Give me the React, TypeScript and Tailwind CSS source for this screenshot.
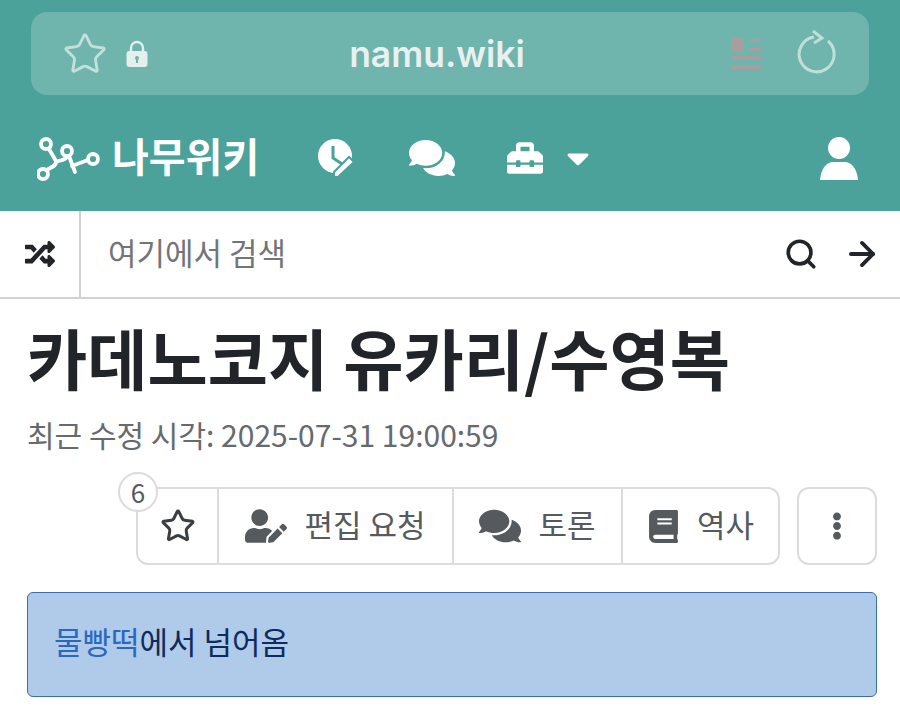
import { ArrowRight, Search, Star } from "lucide-react";
import { FaBook, FaCaretDown, FaComments, FaEllipsisV, FaRandom, FaToolbox, FaUserEdit } from "react-icons/fa";

const kr = "font-['Noto_Sans_CJK_KR','Noto_Sans',sans-serif]";

const TreeMark = () => (
  <svg width="64" height="46" viewBox="0 0 64 46" fill="none" stroke="white" strokeWidth="3.8">
    <path d="M10 35 C14 32 20 31 19 26 L12 14" />
    <path d="M19 27 C24 24 27 27 31 21 M32 21 L38 37 M35 31 L51 25" strokeLinecap="round" />
    <circle cx="6" cy="39" r="5" />
    <circle cx="9" cy="9" r="5" />
    <circle cx="30" cy="16" r="5" />
    <circle cx="56" cy="24" r="5" />
  </svg>
);

const RecentIcon = () => (
  <svg width="38" height="38" viewBox="0 0 38 38">
    <circle cx="17" cy="17" r="17" fill="white" />
    <path d="M15 7 V19 L24 25" fill="none" stroke="#4aa29b" strokeWidth="3" />
    <path d="M20 38 L16 38 L16 33 L31 18 L36 23 Z" fill="white" stroke="#4aa29b" strokeWidth="2" />
  </svg>
);

const ReaderIcon = () => (
  <svg width="30" height="31" viewBox="0 0 30 31" fill="#a89e9e">
    <rect x="0" y="0" width="13" height="14" rx="3" />
    <rect x="18" y="1" width="12" height="3" />
    <rect x="18" y="10" width="12" height="3" />
    <rect x="0" y="18" width="30" height="4" />
    <rect x="0" y="27" width="30" height="4" />
  </svg>
);

const ReloadIcon = () => (
  <svg width="40" height="44" viewBox="0 0 40 44" fill="none" stroke="#bfdfda" strokeWidth="3" className="ml-[36px] -mt-[3px]">
    <path d="M17 7 A17.5 17.5 0 1 0 31 11" />
    <path d="M16 1 L25 8 L17 13" />
  </svg>
);

const LockIcon = () => (
  <svg width="22" height="27" viewBox="0 0 22 27" className="ml-[18px] -mt-[1px]">
    <path d="M5 12 V8 A6 6 0 0 1 17 8 V12" fill="none" stroke="#e4f0ee" strokeWidth="2.4" />
    <rect x="0.5" y="11" width="21" height="16" rx="3" fill="#e4f0ee" />
    <circle cx="11" cy="18" r="2" fill="#6fb4ad" />
    <rect x="10" y="18" width="2" height="5" fill="#6fb4ad" />
  </svg>
);

const UserIcon = () => (
  <svg width="38" height="43" viewBox="0 0 38 43" fill="white" className="ml-auto">
    <circle cx="19" cy="11" r="11" />
    <path d="M0 43 C1 31 7 25 13 25 H25 C31 25 37 31 38 43 Z" />
  </svg>
);

const Tab = ({ icon, label, className }: { icon: React.ReactNode; label?: string; className: string }) => (
  <button className={`flex h-full items-center justify-center gap-[17px] border-r-2 border-[#dcdcdc] last:border-r-0 ${className}`}>
    {icon}
    {label && <span className={`pb-[5px] text-[31px] leading-none text-[#555a5e] ${kr}`}>{label}</span>}
  </button>
);

export default function App() {
  return (
    <div className={`h-[710px] w-[900px] overflow-hidden bg-white ${kr}`}>
      <header className="h-[211px] bg-[#4aa29b] px-[31px] pt-3">
        <div className="flex h-[83px] items-center rounded-2xl bg-[#6fb4ad] pl-[31px] pr-[32px]">
          <Star size={46} strokeWidth={1.5} className="text-[#c3e0dc]" />
          <LockIcon />
          <span className="flex-1 pr-[5px] pt-[3px] text-center font-['Inter',sans-serif] text-[35.5px] font-semibold leading-none text-[#e8f1f0]">
            namu.wiki
          </span>
          <ReaderIcon />
          <ReloadIcon />
        </div>
        <nav className="mt-[40px] flex items-center pl-[6px] pr-[11px] text-white">
          <TreeMark />
          <span className="ml-[11px] w-[156px] pb-[6px] text-[40px] font-bold leading-none">나무위키</span>
          <span className="ml-[50px]"><RecentIcon /></span>
          <FaComments size={46} className="ml-[53px]" />
          <FaToolbox size={36} className="ml-[52px]" />
          <FaCaretDown size={36} className="ml-[17px]" />
          <UserIcon />
        </nav>
      </header>

      <div className="flex h-[88px] items-center border-b-2 border-[#d2d2d2]">
        <div className="flex h-full w-[81px] items-center justify-center border-r-2 border-[#d2d2d2]">
          <FaRandom size={30} className="text-[#212529]" />
        </div>
        <span className="ml-[27px] flex-1 pb-[6px] text-[31px] leading-none text-[#727578]">여기에서 검색</span>
        <Search size={34} strokeWidth={2.6} className="text-[#212529]" />
        <ArrowRight size={38} strokeWidth={2.4} className="ml-[25px] mr-[19px] text-[#212529]" />
      </div>

      <main className="pl-[27px] pr-[23px]">
        <h1 className="mt-[22px] text-[65.5px] font-bold leading-[72px] whitespace-nowrap text-[#212529]">카데노코지 유카리/수영복</h1>
        <p className="mt-[19px] text-[30px] leading-[44px] text-[#666a6e]">최근 수정 시각: 2025-07-31 19:00:59</p>

        <div className="mt-[31px] flex h-[78px] justify-end gap-[17px]">
          <div className="relative flex rounded-xl border-2 border-[#dcdcdc]">
            <span className="absolute -left-[20px] -top-[17px] flex h-[40px] w-[40px] items-center justify-center rounded-full border-2 border-[#dcdcdc] bg-white text-[26px] leading-none text-[#555a5e]">
              6
            </span>
            <Tab className="w-[81px]" icon={<Star size={36} strokeWidth={2} className="text-[#3a3f44]" />} />
            <Tab className="w-[235px]" icon={<FaUserEdit size={42} className="text-[#555a5e]" />} label="편집 요청" />
            <Tab className="w-[169px]" icon={<FaComments size={42} className="text-[#555a5e]" />} label="토론" />
            <Tab className="w-[155px]" icon={<FaBook size={33} className="text-[#555a5e]" />} label="역사" />
          </div>
          <button className="flex w-[80px] items-center justify-center rounded-xl border-2 border-[#dcdcdc]">
            <FaEllipsisV size={28} className="text-[#555a5e]" />
          </button>
        </div>

        <div className="mt-[27px] flex h-[105px] items-center rounded-md border border-[#3d6da8] bg-[#afcbe9] pl-[26px] pr-[27px] pb-[8px] text-[31px] leading-none text-[#0f2a5c]">
          <a className="text-[#2a68bd]">물빵떡</a>에서 넘어옴
        </div>
      </main>
    </div>
  );
}
